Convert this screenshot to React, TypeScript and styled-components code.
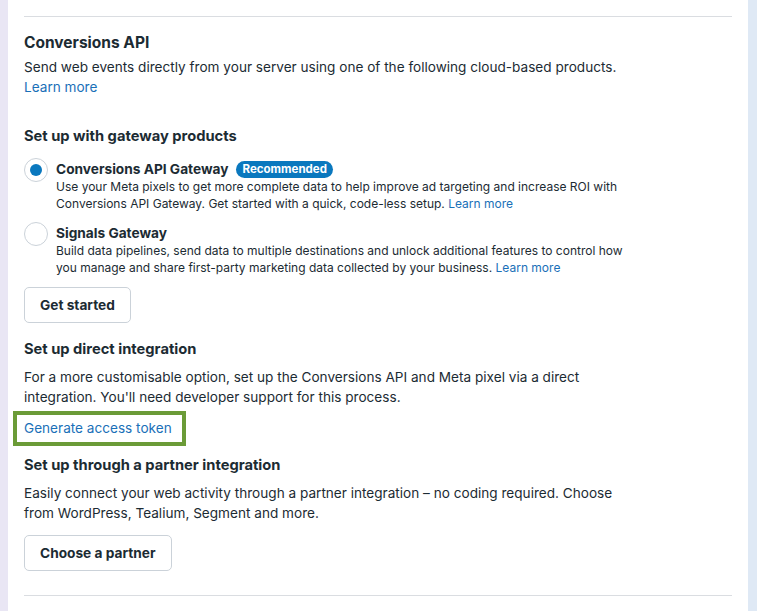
import React from "react";
import styled, { createGlobalStyle } from "styled-components";

const Global = createGlobalStyle`
  html, body { margin: 0; padding: 0; background: #ffffff; }
  body { font-family: Inter, "Noto Sans", Arial, sans-serif; color: #1c2b33; -webkit-font-smoothing: antialiased; }
  * { box-sizing: border-box; }
`;

const Page = styled.div`
  display: flex;
  width: 757px;
  height: 611px;
  overflow: hidden;
`;

const LeftStrip = styled.div`
  width: 8px;
  flex: none;
  background: #e9e6f4;
`;

const RightStrip = styled.div`
  width: 9px;
  flex: none;
  background: #dfe9f5;
`;

const Card = styled.div`
  flex: 1;
  background: #ffffff;
  padding: 16px 16px 0 16px;
  display: flex;
  flex-direction: column;
`;

const Divider = styled.hr<{ $mt?: number }>`
  border: none;
  border-top: 1px solid #dadde1;
  margin: ${(p) => p.$mt ?? 0}px 0 0 0;
  width: 100%;
`;

const Title = styled.h2`
  margin: 15px 0 3px 0;
  font-size: 15.5px;
  line-height: 22px;
  font-weight: 700;
`;

const SubTitle = styled.h3<{ $mt: number; $mb: number }>`
  margin: ${(p) => p.$mt}px 0 ${(p) => p.$mb}px 0;
  font-size: 14.7px;
  line-height: 20px;
  font-weight: 700;
`;

const Text = styled.p`
  margin: 0;
  font-size: 13.6px;
  line-height: 20px;
  color: #1c2b33;
`;

const Link = styled.a`
  color: #1a70b8;
  text-decoration: none;
  cursor: pointer;
`;

const OptionList = styled.div`
  display: flex;
  flex-direction: column;
  gap: 12px;
`;

const Option = styled.label`
  display: flex;
  gap: 8px;
  align-items: flex-start;
`;

const Radio = styled.span<{ $checked?: boolean }>`
  flex: none;
  width: 24px;
  height: 24px;
  border-radius: 50%;
  border: 1px solid #cbd2d9;
  background: #fff;
  display: flex;
  align-items: center;
  justify-content: center;
  margin-top: -2px;
  &::after {
    content: "";
    width: 12px;
    height: 12px;
    border-radius: 50%;
    background: ${(p) => (p.$checked ? "#0a78be" : "transparent")};
  }
`;

const OptionBody = styled.div`
  display: flex;
  flex-direction: column;
`;

const OptionTitle = styled.div`
  display: flex;
  align-items: center;
  gap: 8px;
  font-size: 13.7px;
  line-height: 18px;
  font-weight: 700;
`;

const Badge = styled.span`
  background: #0a78be;
  color: #fff;
  font-size: 11.5px;
  font-weight: 700;
  line-height: 17px;
  padding: 0 6px;
  border-radius: 9px;
`;

const OptionDesc = styled.div`
  font-size: 12px;
  line-height: 17px;
  color: #1c2b33;
`;

const Button = styled.button<{ $mt: number }>`
  align-self: flex-start;
  margin-top: ${(p) => p.$mt}px;
  height: 36px;
  padding: 0 15px;
  background: #fff;
  border: 1px solid #cbd2d9;
  border-radius: 5px;
  font-family: inherit;
  font-size: 13.7px;
  font-weight: 700;
  color: #1c2b33;
`;

const Highlight = styled.div`
  align-self: flex-start;
  margin: 4px 0 0 -11px;
  border: 4px solid #6b9b37;
  padding: 4px 10px 4px 7px;
  font-size: 13.6px;
  line-height: 19px;
`;

export default function App() {
  return (
    <Page>
      <Global />
      <LeftStrip />
      <Card>
        <Divider />
        <Title>Conversions API</Title>
        <Text>
          Send web events directly from your server using one of the following cloud-based products.
          <br />
          <Link>Learn more</Link>
        </Text>

        <SubTitle $mt={29} $mb={14}>Set up with gateway products</SubTitle>
        <OptionList>
          <Option>
            <Radio $checked />
            <OptionBody>
              <OptionTitle>
                Conversions API Gateway <Badge>Recommended</Badge>
              </OptionTitle>
              <OptionDesc>
                Use your Meta pixels to get more complete data to help improve ad targeting and increase ROI with
                <br />
                Conversions API Gateway. Get started with a quick, code-less setup. <Link>Learn more</Link>
              </OptionDesc>
            </OptionBody>
          </Option>
          <Option>
            <Radio />
            <OptionBody>
              <OptionTitle>Signals Gateway</OptionTitle>
              <OptionDesc>
                Build data pipelines, send data to multiple destinations and unlock additional features to control how
                <br />
                you manage and share first-party marketing data collected by your business. <Link>Learn more</Link>
              </OptionDesc>
            </OptionBody>
          </Option>
        </OptionList>
        <Button $mt={11}>Get started</Button>

        <SubTitle $mt={16} $mb={8}>Set up direct integration</SubTitle>
        <Text>
          For a more customisable option, set up the Conversions API and Meta pixel via a direct
          <br />
          integration. You'll need developer support for this process.
        </Text>
        <Highlight>
          <Link>Generate access token</Link>
        </Highlight>

        <SubTitle $mt={9} $mb={8}>Set up through a partner integration</SubTitle>
        <Text>
          Easily connect your web activity through a partner integration – no coding required. Choose
          <br />
          from WordPress, Tealium, Segment and more.
        </Text>
        <Button $mt={12}>Choose a partner</Button>
        <Divider $mt={24} />
      </Card>
      <RightStrip />
    </Page>
  );
}
